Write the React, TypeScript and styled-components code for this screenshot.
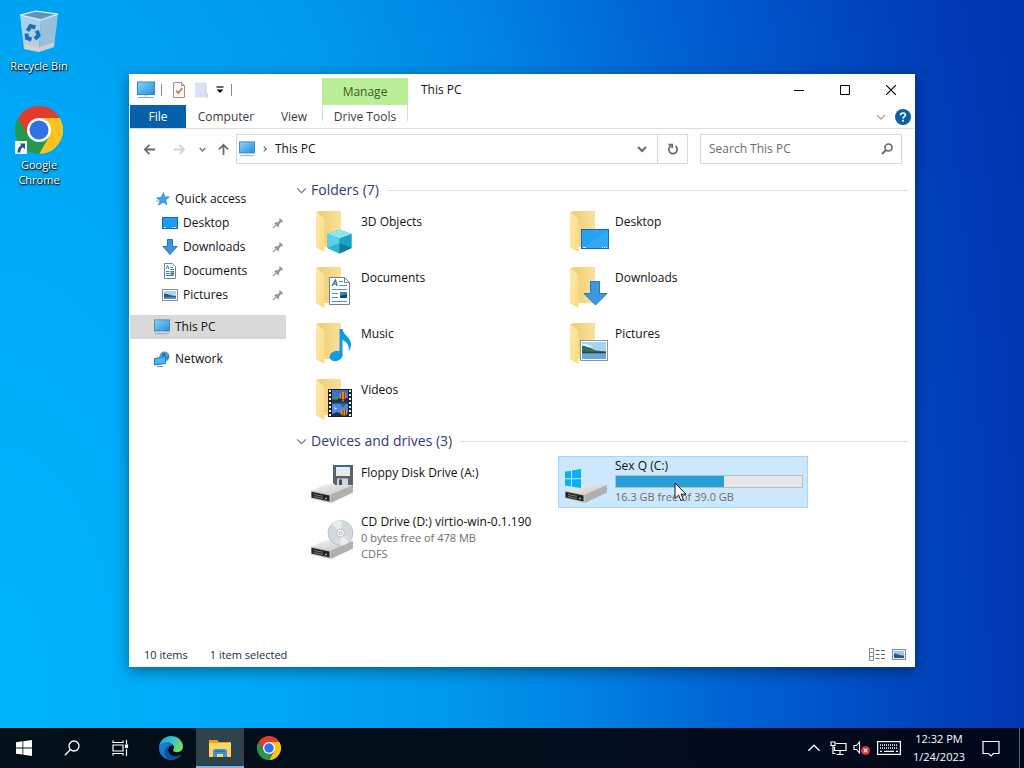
import React from "react";
import styled, { createGlobalStyle, css } from "styled-components";

const GlobalStyle = createGlobalStyle`
  *, *::before, *::after { box-sizing: border-box; }
  html, body { margin: 0; padding: 0; }
  body { font: 12px/16px "Open Sans", "Noto Sans", sans-serif; color: #111; }
  button, input { font: inherit; color: inherit; }
  button { border: 0; padding: 0; margin: 0; background: none; cursor: default; }
  ul { list-style: none; margin: 0; padding: 0; }
  h1, h2, p { margin: 0; font-weight: 400; }
  svg { display: block; flex: none; }
`;

/* ---------- desktop ---------- */

const Screen = styled.div`
  display: flex;
  flex-direction: column;
  min-height: 100vh;
  background: radial-gradient(
    104% 290% at 0% 90%,
    #00b4fb 0%,
    #00a8f6 25%,
    #0098ec 42%,
    #0082e2 55%,
    #0064d4 68%,
    #004fc6 80%,
    #003ab4 94%,
    #0036b0 100%
  );
`;

const DesktopArea = styled.main`
  position: relative;
  flex: 1;
`;

const Shortcuts = styled.ul`
  display: grid;
  grid-auto-rows: 100px;
  width: 74px;
  margin-left: 2px;
  padding-top: 6px;
`;

const Shortcut = styled.button`
  display: flex;
  flex-direction: column;
  align-items: center;
  gap: 3px;
  width: 100%;
  color: #fff;
  font-size: 11px;
  line-height: 15px;
  text-shadow: 0 1px 2px #000, 1px 1px 1px rgba(0, 0, 0, 0.8);
`;

/* ---------- explorer window ---------- */

const Window = styled.section`
  position: absolute;
  inset: 74px 109px 61px 129px;
  display: flex;
  flex-direction: column;
  background: #fff;
  border: 1px solid #fff;
  box-shadow: 0 4px 14px rgba(0, 0, 0, 0.4);
`;

const TitleBar = styled.header`
  display: grid;
  grid-template-columns: 192px 86px 1fr auto;
  height: 30px;
`;

const QuickTools = styled.div`
  display: flex;
  align-items: center;
  padding-left: 7px;
`;

const ToolButton = styled.button<{ $width: number }>`
  display: grid;
  place-items: center;
  width: ${(p) => p.$width}px;
  height: 20px;
`;

const ToolDivider = styled.span`
  width: 1px;
  height: 12px;
  margin: 0 9px 0 6px;
  background: #8c8c8c;
`;

const ContextTitle = styled.div`
  align-self: end;
  height: 27px;
  line-height: 27px;
  text-align: center;
  color: #3c5a28;
  background: #bbee98;
`;

const WindowTitle = styled.h1`
  padding-left: 13px;
  font-size: 12px;
  line-height: 30px;
`;

const WindowControls = styled.div`
  display: grid;
  grid-template-columns: repeat(3, 46px);
  button { display: grid; place-items: center; }
`;

const RibbonTabs = styled.nav`
  display: grid;
  grid-template-columns: 56px 80px 56px 86px 1fr auto auto;
  align-items: center;
  height: 24px;
  border-bottom: 1px solid #dcdcdc;
`;

const Tab = styled.button<{ $kind?: "file" | "context" }>`
  height: 23px;
  color: #3b3b3b;
  ${(p) =>
    p.$kind === "file" &&
    css`
      background: #0860ac;
      color: #fff;
    `}
  ${(p) =>
    p.$kind === "context" &&
    css`
      background:
        linear-gradient(#d5dcd2, #d5dcd2) left top / 1px 16px no-repeat,
        linear-gradient(#d5dcd2, #d5dcd2) right top / 1px 16px no-repeat;
    `}
`;

const RibbonButton = styled.button`
  display: grid;
  place-items: center;
  width: 22px;
  height: 22px;
`;

const AddressRow = styled.div`
  display: grid;
  grid-template-columns: 30px 30px 16px 26px 1fr 202px;
  align-items: center;
  padding: 5px 12px 0 4px;
`;

const NavButton = styled.button`
  display: grid;
  place-items: center;
  height: 30px;
`;

const AddressBox = styled.div`
  display: flex;
  align-items: center;
  height: 30px;
  margin-right: 12px;
  border: 1px solid #d9d9d9;
`;

const Crumb = styled.button`
  flex: 1;
  display: flex;
  align-items: center;
  gap: 7px;
  padding-left: 2px;
  text-align: left;
`;

const BoxButton = styled.button<{ $divided?: boolean }>`
  display: grid;
  place-items: center;
  width: 30px;
  height: 28px;
  border-left: ${(p) => (p.$divided ? "1px solid #d9d9d9" : "0")};
`;

const SearchBox = styled.label`
  display: flex;
  align-items: center;
  height: 30px;
  padding: 0 8px;
  border: 1px solid #d9d9d9;
  input {
    flex: 1;
    min-width: 0;
    padding: 0;
    border: 0;
    outline: 0;
    background: none;
  }
  input::placeholder { color: #6d6d6d; opacity: 1; }
`;

const Body = styled.div`
  display: grid;
  grid-template-columns: 156px 1fr;
  column-gap: 10px;
  flex: 1;
  min-height: 0;
`;

const NavPane = styled.nav`
  padding-top: 23px;
`;

const NavGroup = styled.ul`
  margin-bottom: 8px;
`;

const NavRow = styled.button<{ $level?: number; $selected?: boolean }>`
  display: flex;
  align-items: center;
  gap: 5px;
  width: 100%;
  height: 24px;
  padding: 0 2px 0 ${(p) => (p.$level ? 32 : 24)}px;
  text-align: left;
  background: ${(p) => (p.$selected ? "#d9d9d9" : "transparent")};
`;

const NavLabel = styled.span`
  flex: 1;
`;

const Content = styled.div`
  min-width: 0;
  overflow: auto;
  padding: 14px 6px 0 0;
`;

const GroupHeader = styled.h2`
  display: flex;
  align-items: center;
  gap: 4px;
  height: 24px;
  margin-bottom: 3px;
  color: #2f3b78;
  font-size: 14px;
  line-height: 24px;
  &::after {
    content: "";
    flex: 1;
    height: 1px;
    margin-left: 4px;
    background: #e0e0e0;
  }
`;

const Tiles = styled.ul`
  display: grid;
  grid-template-columns: repeat(auto-fill, 250px);
  grid-auto-rows: 52px;
  gap: 4px;
  margin-bottom: 4px;
  padding-left: 8px;
`;

const Tile = styled.button<{ $selected?: boolean }>`
  display: flex;
  gap: 5px;
  width: 100%;
  height: 52px;
  padding: 1px 4px 1px 3px;
  text-align: left;
  border: 1px solid ${(p) => (p.$selected ? "#a6d5f7" : "transparent")};
  background: ${(p) => (p.$selected ? "#cce8ff" : "transparent")};
`;

const TileText = styled.span<{ $single?: boolean }>`
  display: flex;
  flex-direction: column;
  flex: 1;
  padding-top: ${(p) => (p.$single ? 7 : 0)}px;
`;

const Detail = styled.span`
  color: #6d6d6d;
  font-size: 11px;
`;

const Capacity = styled.span`
  display: block;
  height: 13px;
  margin: 1px 0;
  border: 1px solid #bcbcbc;
  background: #e6e6e6;
`;

const CapacityFill = styled.span`
  display: block;
  height: 100%;
  background: #26a0da;
`;

const StatusBar = styled.footer`
  display: flex;
  align-items: center;
  gap: 22px;
  height: 23px;
  padding: 0 8px 0 14px;
  color: #1f2a44;
  font-size: 11px;
`;

const ViewButtons = styled.div`
  display: flex;
  gap: 6px;
  margin-left: auto;
`;

const Pointer = styled.svg`
  position: absolute;
  left: 674px;
  top: 482px;
  pointer-events: none;
`;

/* ---------- taskbar ---------- */

const Taskbar = styled.footer`
  display: flex;
  height: 40px;
  background: linear-gradient(90deg, #021019, #020d1b 60%, #01071a);
  color: #fff;
`;

const TaskGroup = styled.div<{ $apps?: boolean }>`
  display: flex;
  gap: ${(p) => (p.$apps ? 1 : 0)}px;
  margin-left: ${(p) => (p.$apps ? 3 : 0)}px;
`;

const TaskButton = styled.button<{ $active?: boolean }>`
  display: grid;
  place-items: center;
  width: 48px;
  height: 40px;
  background: ${(p) => (p.$active ? "#30434d" : "transparent")};
  box-shadow: ${(p) => (p.$active ? "inset 0 -2px #76b9ed" : "none")};
`;

const Tray = styled.div`
  display: flex;
  margin-left: auto;
`;

const TrayButton = styled.button<{ $width?: number }>`
  display: grid;
  place-items: center;
  width: ${(p) => p.$width ?? 24}px;
  height: 40px;
`;

const Clock = styled.button`
  width: 70px;
  font-size: 11px;
  line-height: 18px;
  text-align: center;
  span { display: block; }
`;

const ShowDesktop = styled.button`
  width: 5px;
  margin-left: 11px;
  border-left: 1px solid #5a6472;
`;

/* ---------- small drawings ---------- */

const MonitorIcon = ({ size = 18 }: { size?: number }) => (
  <svg width={size} height={size} viewBox="0 0 18 18">
    <defs>
      <linearGradient id="screenBlue" x1="0" y1="0" x2="1" y2="1">
        <stop offset="0" stopColor="#8ad4fb" />
        <stop offset="1" stopColor="#1f8fe0" />
      </linearGradient>
    </defs>
    <rect x=".5" y="1" width="17" height="12.500" fill="url(#screenBlue)" stroke="#3f87b0" />
    <path d="M7 14h4v1.500H7z" fill="#c9d4dc" />
    <path d="M1 16.500h16" stroke="#8ea6b4" />
  </svg>
);

const PropertiesIcon = () => (
  <svg width="14" height="16" viewBox="0 0 14 16">
    <path d="M1.500.5h8l3 3v12h-11z" fill="#fdfaf7" stroke="#9a918b" />
    <path d="M9.500.5v3h3" fill="none" stroke="#9a918b" />
    <path d="M4 8.500L6.300 11 10.300 6" fill="none" stroke="#c77a48" strokeWidth="1.600" />
  </svg>
);

const NewFolderIcon = () => (
  <svg width="14" height="16" viewBox="0 0 14 16">
    <path d="M1 .5h11v10l1.500 1.500v3.500H1z" fill="#dbe2ef" />
    <path d="M12 .5v10l1.500 1.500v3.500" fill="none" stroke="#c6cfdd" />
  </svg>
);

const CustomizeIcon = () => (
  <svg width="8" height="8" viewBox="0 0 8 8">
    <path d="M.5 1h7" stroke="#111" strokeWidth="1.300" />
    <path d="M.5 3.500h7L4 7z" fill="#111" />
  </svg>
);

const Chevron = ({ dir, size = 8, color = "#666", weight = 1.5 }: { dir: "down" | "right" | "up"; size?: number; color?: string; weight?: number }) => {
  const d = { down: "M1 3l4 4 4-4", up: "M1 7l4-4 4 4", right: "M3 1l4 4-4 4" }[dir];
  return (
    <svg width={size} height={size} viewBox="0 0 10 10" fill="none" stroke={color} strokeWidth={weight}>
      <path d={d} />
    </svg>
  );
};

const Arrow = ({ dir, color }: { dir: "left" | "right" | "up"; color: string }) => {
  const d = { left: "M13 7H2M7 2L2 7l5 5", right: "M1 7h11M7 2l5 5-5 5", up: "M7 13V2M2 7l5-5 5 5" }[dir];
  return (
    <svg width="13" height="13" viewBox="0 0 14 14" fill="none" stroke={color} strokeWidth="1.900">
      <path d={d} />
    </svg>
  );
};

const HelpIcon = () => (
  <svg width="16" height="16" viewBox="0 0 16 16">
    <circle cx="8" cy="8" r="8" fill="#0a5fa6" />
    <path d="M5.600 6.200C5.600 4.600 6.600 4 8 4s2.400.8 2.400 2.100C10.400 7.600 8 7.700 8 9.600" fill="none" stroke="#fff" strokeWidth="1.700" />
    <rect x="7.100" y="10.800" width="1.800" height="1.800" fill="#fff" />
  </svg>
);

const RefreshIcon = () => (
  <svg width="12" height="12" viewBox="0 0 12 12" fill="none" stroke="#6a6a6a" strokeWidth="1.700">
    <path d="M8.500 3A4.200 4.200 0 1 1 4 2.700" />
    <path d="M1.500 1.600h3.700v3.700" />
  </svg>
);

const LensIcon = ({ size, color, weight }: { size: number; color: string; weight: number }) => (
  <svg width={size} height={size} viewBox="0 0 16 16" fill="none" stroke={color} strokeWidth={weight}>
    <circle cx="10" cy="6" r="5" />
    <path d="M6.500 9.500L.8 15.200" />
  </svg>
);

const SearchGlyph = () => (
  <svg width="12" height="12" viewBox="0 0 12 12" fill="none" stroke="#6a6a6a">
    <circle cx="7.500" cy="4.500" r="3.500" strokeWidth="1.700" />
    <path d="M5 7L1 11" strokeWidth="2" />
  </svg>
);

const StarIcon = () => (
  <svg width="16" height="16" viewBox="0 0 16 16">
    <path d="M9.500 1.500l1.200 4.200 4.800.3-3.800 2.800 1.300 5-4-2.600-4.200 3 1.200-4.700L2.500 7l4.700-.8z" fill="#3ba3ea" stroke="#1d7fc6" strokeWidth=".6" />
    <path d="M2 10h3M3.500 13h2" stroke="#58b1ee" />
  </svg>
);

const DesktopShape = () => (
  <svg width="16" height="16" viewBox="0 0 16 16">
    <rect x=".5" y="2.500" width="15" height="11" fill="#1d9bf5" stroke="#0c6cb5" />
    <path d="M2 12.500h2M10 12.500h1M12 12.500h2" stroke="#d8efff" />
  </svg>
);

const DownArrowIcon = () => (
  <svg width="16" height="16" viewBox="0 0 16 16">
    <path d="M5.500.5h5v7h4.500L8 15.500 1 7.500h4.500z" fill="#3d94e0" stroke="#2a74b8" />
  </svg>
);

const DocumentIcon = () => (
  <svg width="16" height="16" viewBox="0 0 16 16">
    <path d="M2.500.5h8l3 3v12h-11z" fill="#fff" stroke="#76838d" />
    <path d="M4 6l1.500-3.500L7 6M8.500 4.500H11M8.500 6.500H12M4 8.500h3.500M8.500 8.500H12M4 10.500h3.500M4 12.500h8" fill="none" stroke="#2e83b5" />
    <path d="M8.500 10.500H12" stroke="#1d5d86" strokeWidth="2" />
  </svg>
);

const PictureIcon = () => (
  <svg width="16" height="16" viewBox="0 0 16 16">
    <rect x=".5" y="2.500" width="15" height="11" fill="#fff" stroke="#84909a" />
    <rect x="2" y="4" width="12" height="8" fill="#a9d3f2" />
    <path d="M2 7c3-1 6 2 12 2v3H2z" fill="#335f6b" />
    <path d="M2 10.500c4-.5 8 0 12-.5v2H2z" fill="#5b93c4" />
  </svg>
);

const NetworkIcon = () => (
  <svg width="16" height="16" viewBox="0 0 16 16">
    <circle cx="10.500" cy="5.500" r="5" fill="#4aa3d8" />
    <path d="M8 1.500l3 1 1 2-3 1zM12.500 6l2.500-1-1 4z" fill="#2b6e9e" />
    <path d="M.5 7.500l11-2v7l-11 1.500z" fill="#4db5f5" stroke="#1f7cb8" />
    <path d="M3 15.500h6" stroke="#6a9ab8" />
  </svg>
);

const PinIcon = () => (
  <svg width="12" height="12" viewBox="0 0 12 12">
    <path d="M7.500.8l3.700 3.700-1 .6-.9-.2-2.100 2.300.1 2-1.100 1L2.300 6.300l1-1 2.100.1 2.200-2.200-.3-1.200z" fill="#8f979d" />
    <path d="M4 8L.8 11.200" stroke="#8f979d" strokeWidth="1.200" />
  </svg>
);

const DetailsViewIcon = () => (
  <svg width="17" height="14" viewBox="0 0 17 14" fill="none" stroke="#8a8a8a">
    <path d="M.5.5h4v4h-4zM.5 4.500h4v4h-4zM.5 8.500h4v4h-4z" />
    <path d="M6.500 2.500h4M12 2.500h4M6.500 6.500h4M12 6.500h4M6.500 10.500h4M12 10.500h4" stroke="#666" />
  </svg>
);

const TilesViewIcon = () => (
  <svg width="14" height="14" viewBox="0 0 14 14">
    <rect x=".5" y="1.500" width="13" height="10" fill="#e6f2fb" stroke="#6f8fb4" />
    <rect x="2" y="3" width="10" height="7" fill="#9fc4e4" />
    <path d="M2 5.500c3 0 5 2 10 2V10H2z" fill="#2f5878" />
  </svg>
);

/* ---------- 48px tile drawings ---------- */

type FolderKind = "objects" | "desktop" | "documents" | "downloads" | "music" | "pictures" | "videos";

const overlays: Record<FolderKind, React.ReactNode> = {
  objects: (
    <g>
      <path d="M31.500 22.500L43.500 27v14L31.500 46.500 19.500 41V27z" fill="#28b3d3" />
      <path d="M31.500 22.500l12 4.500-12 4.500-12-4.500z" fill="#8be6f1" />
      <path d="M19.500 27l12 4.500v15l-12-5.500z" fill="#5fd0e4" />
      <path d="M31.500 31.500l12-4.500v14l-12 5.500z" fill="#1ba3c6" />
      <path d="M19.500 41l12-5v10.500z" fill="#2fb4d0" />
      <path d="M31.500 36l12 5-12 5.500z" fill="#0f7da3" />
    </g>
  ),
  desktop: (
    <g>
      <rect x="19.500" y="22.500" width="27" height="19" fill="#27a0f6" stroke="#1769a8" />
      <path d="M20 41L46 23v18z" fill="#3fadfa" opacity=".5" />
      <path d="M21 40.500h3M40 40.500h1M42 40.500h1M44 40.500h1" stroke="#e4f4ff" />
    </g>
  ),
  documents: (
    <g>
      <path d="M21.500 14.500h15l5 5v22h-20z" fill="#fff" stroke="#76808a" />
      <path d="M36.500 14.500v5h5" fill="none" stroke="#76808a" />
      <path d="M24 23l3.500-6 1.500 6M25.500 21h3" fill="none" stroke="#1f6c9f" strokeWidth="1.200" />
      <path d="M31 18.500h4M31 22.500h8M24 26.500h15M24 30.500h6M24 34.500h6M24 38.500h15" stroke="#4a94bd" />
      <rect x="32" y="29" width="7" height="6" fill="#3b83b2" />
      <path d="M32 33l7-2v4h-7z" fill="#1c4668" />
    </g>
  ),
  downloads: <path d="M28.500 18.500h9v12H45L33.500 42 22 30.500h6.500z" fill="#3a98e6" stroke="#2a76bb" />,
  music: (
    <g fill="#139be0">
      <ellipse cx="28" cy="37" rx="6.600" ry="5" transform="rotate(-16 28 37)" />
      <path d="M31.500 10h3c.6 6 8.500 8 8.500 15.500 0 3-1 5-2.300 7 1-6-2-9.500-6.200-11.500V37h-3z" />
    </g>
  ),
  pictures: (
    <g>
      <rect x="18.500" y="21.500" width="27" height="20" fill="#fff" stroke="#8894a0" />
      <rect x="20" y="23" width="24" height="17" fill="#a5d3f5" />
      <path d="M20 27c6-1 8 2.500 14 4.500l10 1v2H20z" fill="#3d6a5c" />
      <path d="M20 25c4-1 7 1 11 2.500l-3 1c-3 0-5-2-8-2z" fill="#e7f3fb" />
      <path d="M20 34.500c8-1 16-1 24-1V40H20z" fill="#6fa6cf" />
      <path d="M20 33.500h24" stroke="#24454d" strokeWidth="1.500" />
    </g>
  ),
  videos: (
    <g>
      <rect x="20" y="14" width="24" height="28" fill="#1f2226" />
      <rect x="24" y="15" width="16" height="12.500" fill="#3a6fd0" />
      <rect x="24" y="28.500" width="16" height="12.500" fill="#4f87e0" />
      <path d="M22 15v26M42 15v26" stroke="#f2f2f2" strokeWidth="2" strokeDasharray="2 2" />
      <path d="M24 25l6-2 4 1 6-1v4.500H24zM24 39l5-2 5 2 6-2v4H24z" fill="#20324d" />
      <ellipse cx="35" cy="20.500" rx="3.300" ry="3.600" fill="#e2a51e" />
      <path d="M33.500 17.500v6M36.500 17.500v6" stroke="#a22a1c" strokeWidth="1.300" />
      <path d="M34 24.500h2v2h-2z" fill="#c9741c" />
      <ellipse cx="28" cy="23" rx="2.500" ry="1.800" fill="#3f9a48" />
      <path d="M32 29h6l-3 3.500z" fill="#2e7d3a" />
      <ellipse cx="36" cy="37.500" rx="3.300" ry="3" fill="#e2a51e" />
      <path d="M35 35v5M37.500 35v5" stroke="#a22a1c" strokeWidth="1.200" />
      <path d="M26 32l3 1.500-2 1z" fill="#e8eef7" />
    </g>
  ),
};

const FolderIcon = ({ kind }: { kind: FolderKind }) => (
  <svg width="48" height="48" viewBox="0 0 48 48">
    <defs>
      <linearGradient id="folderBack" x1="0" y1="0" x2="1" y2="0">
        <stop offset="0" stopColor="#eccb6e" />
        <stop offset="1" stopColor="#fbe19a" />
      </linearGradient>
      <linearGradient id="folderFront" x1="0" y1="0" x2="1" y2="1">
        <stop offset="0" stopColor="#fdeab0" />
        <stop offset="1" stopColor="#fadb80" />
      </linearGradient>
    </defs>
    <path d="M8 5l5-1h20v36H17z" fill="url(#folderBack)" />
    <path d="M8 4.500l6.500 5.500c1.300 1 2 2 2 4v31L9.500 41.500c-1-.6-1.500-1.300-1.500-2.500z" fill="url(#folderFront)" />
    {overlays[kind]}
  </svg>
);

const DriveIcon = ({ kind }: { kind: "floppy" | "windows" | "disc" }) => (
  <svg width="48" height="48" viewBox="0 0 48 48">
    <defs>
      <linearGradient id="driveTop" x1="0" y1="0" x2="1" y2="1">
        <stop offset="0" stopColor="#f1f1f1" />
        <stop offset="1" stopColor="#c6c6c6" />
      </linearGradient>
    </defs>
    <path d="M3 33L18 26l27 1-20 10.500z" fill="url(#driveTop)" />
    <path d="M23 36.500L45 27v7.500L23 45z" fill="#b0b0b0" />
    <path d="M3 32.500l20 4V45L3 40.500z" fill="#c6c6c6" />
    <path d="M3.500 33.800l18 3.600v6l-18-4z" fill="#242424" />
    <path d="M6 36.500l9 1.800M6 38.500l9 2" stroke="#777" />
    <path d="M17 40.500h2" stroke="#57d66a" strokeWidth="1.500" />
    {kind === "floppy" && (
      <g>
        <path d="M25 7h20v20H27l-2-2z" fill="#5a636b" />
        <rect x="28" y="7" width="14" height="2" fill="#2c6d90" />
        <rect x="28" y="9" width="14" height="9" fill="#e6eaed" />
        <rect x="29" y="20.500" width="11" height="6.500" fill="#d3d7da" />
        <rect x="31" y="21.500" width="3" height="5.500" fill="#474f56" />
      </g>
    )}
    {kind === "disc" && (
      <g>
        <circle cx="32.500" cy="19" r="12.500" fill="#d3d9dc" stroke="#b4babd" strokeWidth=".8" />
        <path d="M32.500 19L24 9.800A12.500 12.500 0 0 1 34 6.600zM32.500 19l8.600 9a12.500 12.500 0 0 1-9 3.400z" fill="#e8edef" />
        <circle cx="32.500" cy="19" r="4" fill="#f2f4f5" stroke="#b2b8bb" strokeWidth=".8" />
        <circle cx="32.500" cy="19" r="1.500" fill="#fff" stroke="#9da3a6" strokeWidth=".8" />
      </g>
    )}
    {kind === "windows" && <path d="M3 13.800l6-1v7.400H3zM10 12.600l9-1.600v9.200h-9zM3 21.200h6v7.300l-6-.9zM10 21.200h9V30l-9-1.300z" fill="#06b2ef" />}
  </svg>
);

/* ---------- logos ---------- */

const ChromeLogo = ({ size, linked }: { size: number; linked?: boolean }) => (
  <svg width={size} height={size} viewBox="0 0 48 48">
    <path d="M24 12h20.800A24 24 0 0 1 24 48l10.400-18z" fill="#fcc31e" />
    <path d="M13.600 30L3.200 12A24 24 0 0 0 24 48l10.400-18L24 36z" fill="#24984b" />
    <path d="M3.200 12A24 24 0 0 1 44.800 12H24L13.600 30z" fill="#e33b2e" />
    <circle cx="24" cy="24" r="12" fill="#fff" />
    <circle cx="24" cy="24" r="9.500" fill="#3072e4" />
    {linked && (
      <g>
        <rect x="0" y="35" width="12" height="13" fill="#f3f6fa" />
        <path d="M4.500 37.500H10V43l-2-1.800c-1.800 1-2.600 2.600-2.800 5.300H2.500c0-3.500 1.500-5.800 3.800-7.200z" fill="#234f9f" />
      </g>
    )}
  </svg>
);

const RecycleLogo = () => (
  <svg width="48" height="49" viewBox="0 0 48 49">
    <defs>
      <linearGradient id="binSide" x1="0" y1="0" x2="0" y2="1">
        <stop offset="0" stopColor="#b4d6ea" />
        <stop offset="1" stopColor="#cfd2d3" />
      </linearGradient>
    </defs>
    <path d="M5 9l21 5-2 32-15-3z" fill="url(#binSide)" opacity=".92" />
    <path d="M26 14l17-6-4 33-15 5z" fill="#9fc3d9" opacity=".95" />
    <path d="M5 9l16-4 22 3-17 6z" fill="#7fabc3" />
    <path d="M9 9l12-3 17 2.500L26 12.500z" fill="#5f95b4" />
    <path d="M5 9l21 5 17-6M5 9l16-4 22 3" fill="none" stroke="#e4f3fb" strokeWidth="1.200" />
    <path d="M9.500 38l15 3 15-5-.6 5L24 46 9.500 43z" fill="#d9d3cb" opacity=".8" />
    <g fill="none" stroke="#1670c4" strokeWidth="4">
      <path d="M12.500 25l3-5 5 1.500" />
      <path d="M22 24.500l1.500 5-3.500 3.500" />
      <path d="M16.500 33.500l-4.500-1.500-.5-4.500" />
    </g>
  </svg>
);

const WindowsLogo = () => (
  <svg width="16" height="16" viewBox="0 0 16 16" fill="#fff">
    <path d="M0 2.200l6.500-.9v6.200H0zM7.300 1.200L16 0v7.500H7.300zM0 8.400h6.500v6.200L0 13.700zM7.300 8.400H16V16l-8.700-1.200z" />
  </svg>
);

const TaskViewIcon = () => (
  <svg width="17" height="16" viewBox="0 0 17 16" fill="none" stroke="#fff" strokeWidth="1.200">
    <path d="M1 .5v2h10v-2M1 15.500v-2h10v2M1 5h10v6H1zM14.500 0v4M14.500 9v7" />
    <rect x="13.500" y="5" width="2" height="2.500" fill="#fff" />
  </svg>
);

const EdgeLogo = () => (
  <svg width="24" height="24" viewBox="0 0 24 24">
    <defs>
      <linearGradient id="edgeTop" x1="0" y1="0" x2="1" y2=".4">
        <stop offset="0" stopColor="#1f9fe0" />
        <stop offset=".55" stopColor="#35c1cf" />
        <stop offset="1" stopColor="#6fdc62" />
      </linearGradient>
      <linearGradient id="edgeLow" x1="0" y1="0" x2="1" y2="1">
        <stop offset="0" stopColor="#1887d8" />
        <stop offset="1" stopColor="#1260b4" />
      </linearGradient>
    </defs>
    <path d="M0 12C0 5 5.500 0 12 0s12 4.800 12 10.500c0 3.700-2.900 5.700-6 5.700-2.800 0-4-1-4-1.900 0-.7 1-1 1-2.800 0-2.500-2.700-5-6.800-5C3.500 6.500 0 9.500 0 12z" fill="url(#edgeTop)" />
    <path d="M0 12c0-3.500 3.500-5.500 8.200-5.500 3 0 5.500 1.500 6.400 3.400C12 8.500 9 10.500 9 14c0 4 4 7 8.500 6.500 2-.2 3.600-1.200 4.700-1.900C20 22 16.300 24 12 24 5.400 24 0 18.600 0 12z" fill="url(#edgeLow)" />
    <path d="M9 14c0 4 4 7 8.500 6.500 2-.2 3.600-1.200 4.700-1.900C20.500 21.500 17 24 12.500 24 8 23 5.500 19.500 5.800 16c.3-4 3.500-7 6.500-7-2 .5-3.300 2.600-3.300 5z" fill="#0f4f9a" />
  </svg>
);

const ExplorerLogo = () => (
  <svg width="22" height="20" viewBox="0 0 22 20">
    <path d="M0 2h8l2 2h12v4H0z" fill="#e8a317" />
    <path d="M0 5h22v14H0z" fill="#fcd462" />
    <path d="M4 19v-6.500L6 11h10l2 1.500V19h-4v-3H8v3z" fill="#3d93d8" />
    <path d="M6.500 12.500h9V14h-9z" fill="#2b74b4" />
  </svg>
);

const NetworkTray = () => (
  <svg width="17" height="15" viewBox="0 0 17 15" fill="none" stroke="#fff" strokeWidth="1.200">
    <path d="M6 2.500h10v7H4.500V6M10 9.500v4M6.500 13.500h7" />
    <path d="M1 1h4v3.500H1zM3 4.500v8h2.500" />
  </svg>
);

const VolumeTray = () => (
  <svg width="18" height="16" viewBox="0 0 18 16">
    <path d="M1 5.500h2.500l3-3.500v11l-3-3.500H1z" fill="none" stroke="#fff" strokeWidth="1.100" />
    <circle cx="12.500" cy="10.500" r="4.500" fill="#d13438" />
    <path d="M10.700 8.700l3.600 3.600M14.300 8.700l-3.600 3.600" stroke="#fff" strokeWidth="1.200" />
  </svg>
);

const KeyboardTray = () => (
  <svg width="24" height="14" viewBox="0 0 24 14" fill="none" stroke="#fff">
    <rect x=".6" y=".6" width="22.800" height="12.800" strokeWidth="1.200" />
    <path d="M3 4h18M3 7h18" strokeWidth="1.300" strokeDasharray="1 1" />
    <path d="M3 10.300h2M7 10.300h10M19 10.300h2" strokeWidth="1.200" />
  </svg>
);

const ActionCenterIcon = () => (
  <svg width="18" height="17" viewBox="0 0 18 17" fill="none" stroke="#fff" strokeWidth="1.200">
    <path d="M1 1.500h16v12h-5.500L9 16l-2.500-2.500H1z" />
  </svg>
);

/* ---------- data ---------- */

const quickLinks = [
  { name: "Desktop", icon: <DesktopShape /> },
  { name: "Downloads", icon: <DownArrowIcon /> },
  { name: "Documents", icon: <DocumentIcon /> },
  { name: "Pictures", icon: <PictureIcon /> },
];

const folders: { name: string; kind: FolderKind }[] = [
  { name: "3D Objects", kind: "objects" },
  { name: "Desktop", kind: "desktop" },
  { name: "Documents", kind: "documents" },
  { name: "Downloads", kind: "downloads" },
  { name: "Music", kind: "music" },
  { name: "Pictures", kind: "pictures" },
  { name: "Videos", kind: "videos" },
];

const drives: { name: string; kind: "floppy" | "windows" | "disc"; used?: number; details: string[] }[] = [
  { name: "Floppy Disk Drive (A:)", kind: "floppy", details: [] },
  { name: "Sex Q (C:)", kind: "windows", used: 58, details: ["16.3 GB free of 39.0 GB"] },
  { name: "CD Drive (D:) virtio-win-0.1.190", kind: "disc", details: ["0 bytes free of 478 MB", "CDFS"] },
];

const Group = ({ title, children }: { title: string; children: React.ReactNode }) => (
  <section>
    <GroupHeader>
      <Chevron dir="down" size={11} color="#6b6f80" weight={1} />
      {title}
    </GroupHeader>
    <Tiles>{children}</Tiles>
  </section>
);

export default function App() {
  return (
    <Screen>
      <GlobalStyle />
      <DesktopArea>
        <Shortcuts>
          <li>
            <Shortcut>
              <RecycleLogo />
              Recycle Bin
            </Shortcut>
          </li>
          <li>
            <Shortcut>
              <ChromeLogo size={48} linked />
              Google Chrome
            </Shortcut>
          </li>
        </Shortcuts>

        <Window aria-label="This PC">
          <TitleBar>
            <QuickTools>
              <MonitorIcon />
              <ToolDivider />
              <ToolButton $width={16} aria-label="Properties"><PropertiesIcon /></ToolButton>
              <ToolButton $width={28} aria-label="New folder"><NewFolderIcon /></ToolButton>
              <ToolButton $width={10} aria-label="Customize toolbar"><CustomizeIcon /></ToolButton>
              <ToolDivider />
            </QuickTools>
            <ContextTitle>Manage</ContextTitle>
            <WindowTitle>This PC</WindowTitle>
            <WindowControls>
              <button aria-label="Minimize">
                <svg width="10" height="10" viewBox="0 0 10 10" stroke="#000"><path d="M0 5.500h10" /></svg>
              </button>
              <button aria-label="Maximize">
                <svg width="10" height="10" viewBox="0 0 10 10" fill="none" stroke="#000"><path d="M.5.5h9v9h-9z" /></svg>
              </button>
              <button aria-label="Close">
                <svg width="10" height="10" viewBox="0 0 10 10" stroke="#000" strokeWidth="1.100"><path d="M0 0l10 10M10 0L0 10" /></svg>
              </button>
            </WindowControls>
          </TitleBar>

          <RibbonTabs>
            <Tab $kind="file">File</Tab>
            <Tab>Computer</Tab>
            <Tab>View</Tab>
            <Tab $kind="context">Drive Tools</Tab>
            <span />
            <RibbonButton aria-label="Expand ribbon"><Chevron dir="down" size={10} color="#a8a8a8" weight={1.3} /></RibbonButton>
            <RibbonButton aria-label="Help"><HelpIcon /></RibbonButton>
          </RibbonTabs>

          <AddressRow>
            <NavButton aria-label="Back"><Arrow dir="left" color="#6a6a6a" /></NavButton>
            <NavButton aria-label="Forward"><Arrow dir="right" color="#d4d4d4" /></NavButton>
            <NavButton aria-label="Recent locations"><Chevron dir="down" size={7} color="#777" weight={2} /></NavButton>
            <NavButton aria-label="Up"><Arrow dir="up" color="#6a6a6a" /></NavButton>
            <AddressBox>
              <Crumb>
                <MonitorIcon size={16} />
                <Chevron dir="right" size={6} color="#666" weight={2} />
                This PC
              </Crumb>
              <BoxButton aria-label="Previous locations"><Chevron dir="down" size={10} color="#6a6a6a" weight={2} /></BoxButton>
              <BoxButton $divided aria-label="Refresh"><RefreshIcon /></BoxButton>
            </AddressBox>
            <SearchBox>
              <input type="text" placeholder="Search This PC" aria-label="Search This PC" />
              <SearchGlyph />
            </SearchBox>
          </AddressRow>

          <Body>
            <NavPane>
              <NavGroup>
                <li>
                  <NavRow><StarIcon /><NavLabel>Quick access</NavLabel></NavRow>
                </li>
                {quickLinks.map((l) => (
                  <li key={l.name}>
                    <NavRow $level={1}>{l.icon}<NavLabel>{l.name}</NavLabel><PinIcon /></NavRow>
                  </li>
                ))}
              </NavGroup>
              <NavGroup>
                <li>
                  <NavRow $selected><MonitorIcon size={16} /><NavLabel>This PC</NavLabel></NavRow>
                </li>
              </NavGroup>
              <NavGroup>
                <li>
                  <NavRow><NetworkIcon /><NavLabel>Network</NavLabel></NavRow>
                </li>
              </NavGroup>
            </NavPane>

            <Content>
              <Group title="Folders (7)">
                {folders.map((f) => (
                  <li key={f.name}>
                    <Tile>
                      <FolderIcon kind={f.kind} />
                      <TileText $single>{f.name}</TileText>
                    </Tile>
                  </li>
                ))}
              </Group>
              <Group title="Devices and drives (3)">
                {drives.map((d) => (
                  <li key={d.name}>
                    <Tile $selected={d.used !== undefined}>
                      <DriveIcon kind={d.kind} />
                      <TileText $single={d.details.length === 0}>
                        <span>{d.name}</span>
                        {d.used !== undefined && (
                          <Capacity role="progressbar" aria-valuenow={d.used}>
                            <CapacityFill style={{ width: `${d.used}%` }} />
                          </Capacity>
                        )}
                        {d.details.map((t) => <Detail key={t}>{t}</Detail>)}
                      </TileText>
                    </Tile>
                  </li>
                ))}
              </Group>
            </Content>
          </Body>

          <StatusBar>
            <span>10 items</span>
            <span>1 item selected</span>
            <ViewButtons>
              <button aria-label="Details view"><DetailsViewIcon /></button>
              <button aria-label="Tiles view"><TilesViewIcon /></button>
            </ViewButtons>
          </StatusBar>
        </Window>

        <Pointer width="14" height="20" viewBox="0 0 14 20">
          <path d="M1 1v15.500l3.600-3.400 2.300 5.500 2.500-1-2.300-5.400H12z" fill="#fff" stroke="#111" />
        </Pointer>
      </DesktopArea>

      <Taskbar>
        <TaskGroup>
          <TaskButton aria-label="Start"><WindowsLogo /></TaskButton>
          <TaskButton aria-label="Search"><LensIcon size={16} color="#fff" weight={1.3} /></TaskButton>
          <TaskButton aria-label="Task view"><TaskViewIcon /></TaskButton>
        </TaskGroup>
        <TaskGroup $apps>
          <TaskButton aria-label="Microsoft Edge"><EdgeLogo /></TaskButton>
          <TaskButton $active aria-label="File Explorer"><ExplorerLogo /></TaskButton>
          <TaskButton aria-label="Google Chrome"><ChromeLogo size={24} /></TaskButton>
        </TaskGroup>
        <Tray>
          <TrayButton aria-label="Show hidden icons"><Chevron dir="up" size={14} color="#fff" weight={0.9} /></TrayButton>
          <TrayButton aria-label="Network"><NetworkTray /></TrayButton>
          <TrayButton aria-label="Volume"><VolumeTray /></TrayButton>
          <TrayButton $width={30} aria-label="Touch keyboard"><KeyboardTray /></TrayButton>
          <Clock>
            <span>12:32 PM</span>
            <span>1/24/2023</span>
          </Clock>
          <TrayButton $width={34} aria-label="Action center"><ActionCenterIcon /></TrayButton>
          <ShowDesktop aria-label="Show desktop" />
        </Tray>
      </Taskbar>
    </Screen>
  );
}
